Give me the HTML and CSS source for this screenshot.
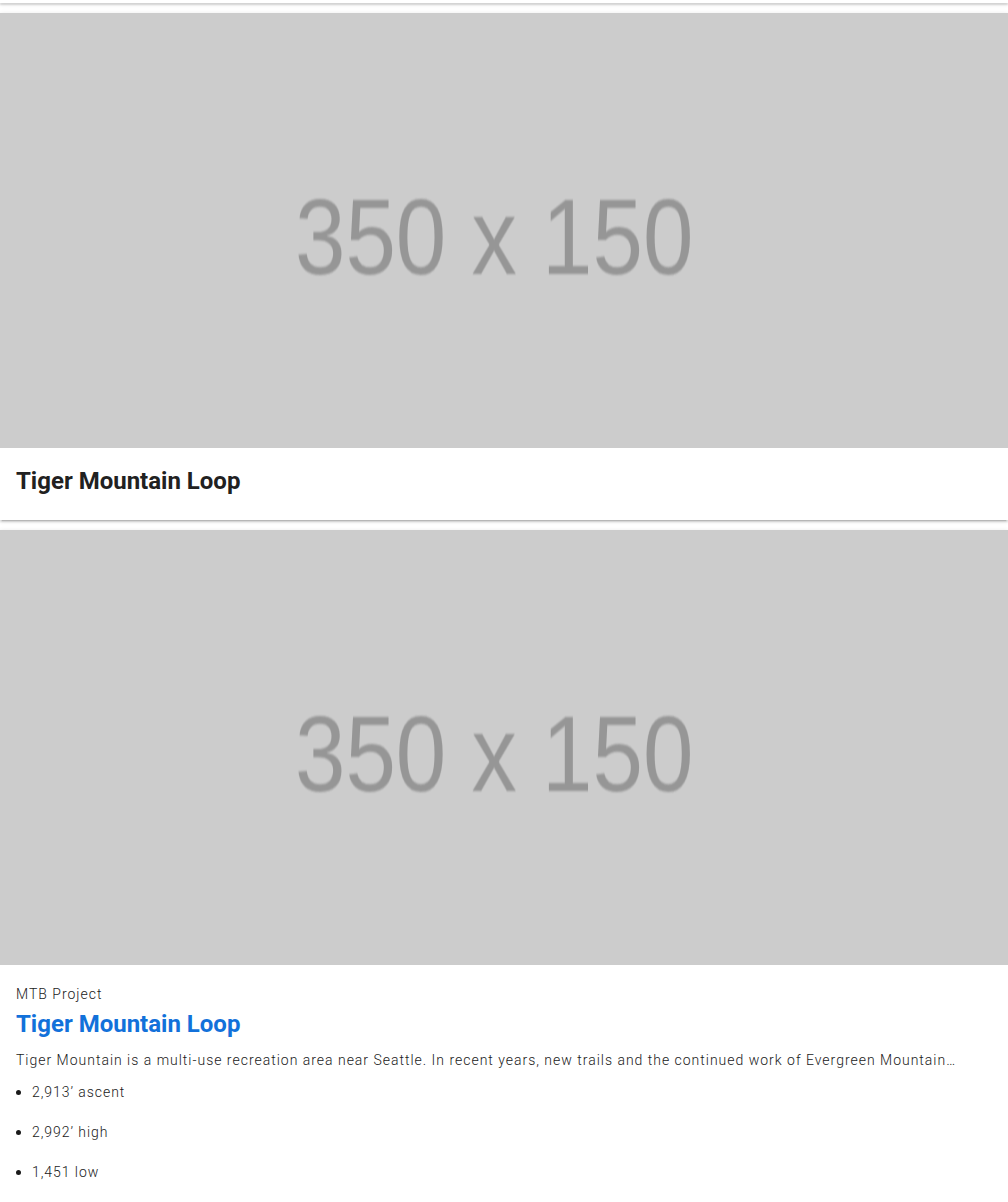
FILE: index.html
```html
<!DOCTYPE html>
<html lang="en">
<head>
<meta charset="utf-8">
<title>Trails</title>
<link rel="stylesheet" href="styles.css">
</head>
<body>
<div class="list">
  <div class="card card--tail"></div>

  <div class="card">
    <div class="placeholder"><span class="placeholder__text">350 x 150</span></div>
    <div class="card__body card__body--simple">
      <h2 class="card__title">Tiger Mountain Loop</h2>
    </div>
  </div>

  <div class="card">
    <div class="placeholder"><span class="placeholder__text">350 x 150</span></div>
    <div class="card__body">
      <div class="card__source">MTB Project</div>
      <h2 class="card__title card__title--link">Tiger Mountain Loop</h2>
      <p class="card__desc">Tiger Mountain is a multi-use recreation area near Seattle. In recent years, new trails and the continued work of Evergreen Mountain…</p>
      <ul class="stats">
        <li>2,913’ ascent</li>
        <li>2,992’ high</li>
        <li>1,451 low</li>
      </ul>
    </div>
  </div>
</div>
</body>
</html>
```

FILE: styles.css
```css
html, body {
  margin: 0;
  padding: 0;
  background: #ffffff;
  font-family: Roboto, "Liberation Sans", Arial, sans-serif;
  color: #212121;
}

.list {
  display: flex;
  flex-direction: column;
  gap: 10px;
}

.card {
  background: #ffffff;
  box-shadow: 0 2px 2px 0 rgba(0, 0, 0, 0.14), 0 3px 1px -2px rgba(0, 0, 0, 0.12), 0 1px 5px 0 rgba(0, 0, 0, 0.12);
  overflow: hidden;
}

.card--tail {
  height: 3px;
}

.placeholder {
  height: 435px;
  background: #cccccc;
  display: flex;
  align-items: center;
  justify-content: center;
}

.placeholder__text {
  font-family: "Liberation Sans", Arial, sans-serif;
  font-size: 108px;
  color: #969696;
  filter: blur(0.8px);
  margin-top: 11px;
  margin-left: -20px;
  transform: scaleX(0.84);
}

.card__body {
  padding: 19px 16px 12px;
}

.card__body--simple {
  padding: 17px 16px 23px;
}

.card__title {
  margin: 0;
  font-size: 24px;
  line-height: 32px;
  font-weight: 700;
  color: #212121;
  letter-spacing: 0;
}

.card__title--link {
  color: #1271da;
  margin-top: 4px;
}

.card__source {
  font-size: 14px;
  line-height: 20px;
  font-weight: 300;
  letter-spacing: 1px;
  color: #1a1a1a;
}

.card__desc {
  margin: 10px 0 0;
  font-size: 14px;
  line-height: 20px;
  font-weight: 300;
  letter-spacing: 0.99px;
  color: #1a1a1a;
}

.stats {
  margin: 12px 0 0;
  padding-left: 0;
  list-style: none;
  font-size: 14px;
  line-height: 20px;
  font-weight: 300;
  letter-spacing: 0.95px;
  color: #1a1a1a;
}

.stats li {
  display: flex;
  align-items: center;
  gap: 11px;
  margin-bottom: 20px;
}

.stats li::before {
  content: "";
  width: 5px;
  height: 5px;
  margin-top: 1px;
  border-radius: 50%;
  background: #1a1a1a;
}
```
